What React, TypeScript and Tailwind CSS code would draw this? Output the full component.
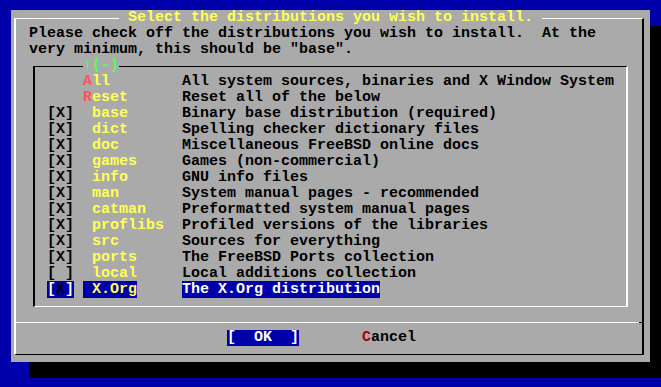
import React from "react";

type Item = { check: string | null; tag: string; desc: string; hot?: boolean; selected?: boolean };

const items: Item[] = [
  { check: null, tag: "All", desc: "All system sources, binaries and X Window System", hot: true },
  { check: null, tag: "Reset", desc: "Reset all of the below", hot: true },
  { check: "X", tag: " base", desc: "Binary base distribution (required)" },
  { check: "X", tag: " dict", desc: "Spelling checker dictionary files" },
  { check: "X", tag: " doc", desc: "Miscellaneous FreeBSD online docs" },
  { check: "X", tag: " games", desc: "Games (non-commercial)" },
  { check: "X", tag: " info", desc: "GNU info files" },
  { check: "X", tag: " man", desc: "System manual pages - recommended" },
  { check: "X", tag: " catman", desc: "Preformatted system manual pages" },
  { check: "X", tag: " proflibs", desc: "Profiled versions of the libraries" },
  { check: "X", tag: " src", desc: "Sources for everything" },
  { check: "X", tag: " ports", desc: "The FreeBSD Ports collection" },
  { check: " ", tag: " local", desc: "Local additions collection" },
  { check: "X", tag: " X.Org", desc: "The X.Org distribution", selected: true },
];

function Row({ it }: { it: Item }) {
  return (
    <div className="flex h-[16px] whitespace-pre">
      <div className="w-[12px]" />
      <div className="w-[36px]">
        {it.check !== null && (
          <span className={it.selected ? "bg-[#0000aa]" : ""}>
            <span className={it.selected ? "text-white" : "text-black"}>[</span>
            <span className="text-black">{it.check}</span>
            <span className={it.selected ? "text-white" : "text-black"}>]</span>
          </span>
        )}
      </div>
      <div className="w-[99px]">
        <span className={`text-[#ffff55] ${it.selected ? "bg-[#0000aa]" : ""}`}>
          {it.hot ? (
            <>
              <span className="text-[#ff5555]">{it.tag[0]}</span>
              {it.tag.slice(1)}
            </>
          ) : (
            it.tag
          )}
        </span>
      </div>
      <div>
        <span className={it.selected ? "bg-[#0000aa] text-white" : "text-black"}>{it.desc}</span>
      </div>
    </div>
  );
}

export default function App() {
  return (
    <div className="w-[661px] h-[387px] bg-[#0000aa] overflow-hidden pt-[10px] pl-[11px] font-['Liberation_Mono',monospace] font-bold text-[15px] leading-[16px]">
      <div className="relative w-[639px] h-[352px] bg-[#aaaaaa] shadow-[18px_16px_0_0_#000] pt-[8px] pl-[3px]">
        <div className="w-[630px] h-[337px] border-l-2 border-t border-r-2 border-b border-l-white border-t-white border-r-black border-b-black flex flex-col pt-[7px]">
          <div className="h-[16px] pl-[13px] whitespace-pre text-black">
            Please check off the distributions you wish to install.  At the
          </div>
          <div className="h-[16px] pl-[13px] whitespace-pre text-black">
            very minimum, this should be "base".
          </div>
          <div className="relative mt-[8px] ml-[17px] w-[595px] h-[241px] border-l-2 border-t border-r-2 border-b border-l-black border-t-black border-r-white border-b-white pt-[7px]">
            <div className="absolute top-[-9px] left-[48px] h-[16px] bg-[#aaaaaa] text-[#55ff55] whitespace-pre">
              ↑(-)
            </div>
            {items.map((it) => (
              <Row key={it.tag} it={it} />
            ))}
          </div>
          <div className="relative mt-[15px] h-[1px] bg-white">
            <div className="absolute right-[-2px] top-0 w-[5px] h-[1px] bg-black" />
          </div>
          <div className="mt-[7px] h-[16px] flex pl-[211px] gap-[63px] whitespace-pre">
            <span className="bg-[#0000aa] text-white">[  OK  ]</span>
            <span className="text-black">
              <span className="text-[#aa0000]">C</span>ancel
            </span>
          </div>
        </div>
        <div className="absolute top-0 left-[108px] h-[16px] bg-[#aaaaaa] text-[#ffff55] whitespace-pre">
          {" Select the distributions you wish to install. "}
        </div>
      </div>
    </div>
  );
}
